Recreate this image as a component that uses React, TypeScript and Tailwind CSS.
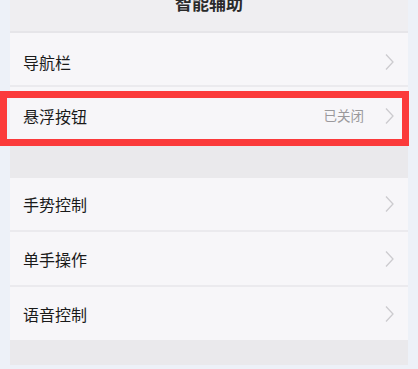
import React from 'react';

const FONT = { fontFamily: '"Noto Sans CJK SC", "Noto Sans", sans-serif' };

function Chevron() {
  return (
    <svg width="11" height="18" viewBox="0 0 11 18" className="shrink-0">
      <path d="M2 1.5 L9 9 L2 16.5" fill="none" stroke="#cccbcf" strokeWidth="1.3" />
    </svg>
  );
}

function Row({ label, value, className = '' }: { label: string; value?: string; className?: string }) {
  return (
    <div className={`flex items-center bg-[#f7f6f9] pl-[13px] pr-[13px] ${className}`}>
      <span className="flex-1 text-[16px] text-[#1a1a1a] leading-none">{label}</span>
      {value && <span className="mr-[20px] text-[13.5px] text-[#9a999c] leading-none">{value}</span>}
      <Chevron />
    </div>
  );
}

export default function App() {
  return (
    <div className="relative w-[418px] h-[369px] overflow-hidden bg-[#edf1f8] px-[10px]" style={FONT}>
      <div className="flex flex-col">
        <div className="h-[31px] bg-[#efeef1] flex justify-center overflow-hidden">
          <span className="-mt-[9px] text-[17px] font-bold text-[#2a2a2a] leading-[24px]">智能辅助</span>
        </div>
        <div className="h-[2px] bg-[#e6e5e9]" />
        <Row label="导航栏" className="h-[52px] pt-[6px]" />
        <div className="h-[2px] bg-[#ebeaee]" />
        <Row label="悬浮按钮" value="已关闭" className="h-[57px]" />
        <div className="h-[34px] bg-[#eae9ec]" />
        <Row label="手势控制" className="h-[52px]" />
        <div className="h-[2px] bg-[#ebeaee]" />
        <Row label="单手操作" className="h-[53px]" />
        <div className="h-[2px] bg-[#ebeaee]" />
        <Row label="语音控制" className="h-[53px]" />
        <div className="h-[25px] bg-[#eae9ec]" />
      </div>
      <div className="absolute left-0 top-[91px] w-[409px] h-[55px] border-[7px] border-[#fb3a3b]" />
    </div>
  );
}
